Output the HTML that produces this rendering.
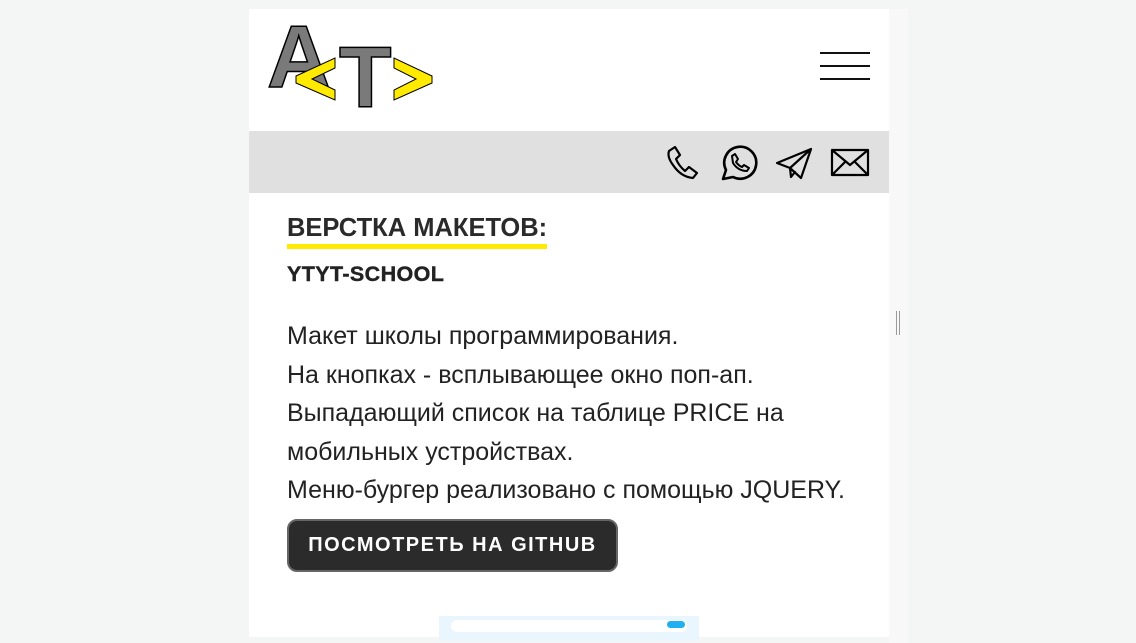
<!DOCTYPE html>
<html><head><meta charset="utf-8"><style>
body{margin:0;width:1136px;height:643px;background:#f4f5f5;overflow:hidden;font-family:"Liberation Sans",sans-serif;position:relative}
.card{position:absolute;left:249px;top:9px;width:640px;height:628px;background:#fff;overflow:hidden}
.sb{position:absolute;left:889px;top:9px;width:19px;height:634px;background:#f8f8f8}
.bar{position:absolute;top:122px;left:0;width:640px;height:62px;background:#e0e0e0}
.burger{position:absolute;left:571px;top:43px;width:50px}
.burger div{height:2px;background:#111;margin-bottom:11px}
.lg{position:absolute;font-weight:bold;color:#7a7a7a;-webkit-text-stroke:1.5px #000;line-height:1}
h2{position:absolute;left:38px;top:205px;margin:0;font-size:25.5px;font-weight:bold;color:#2a2a2a;white-space:nowrap}
.ul{position:absolute;left:38px;top:235px;width:260px;height:5px;background:#ffea00}
h3{position:absolute;left:38px;top:253px;margin:0;font-size:21.5px;font-weight:900;color:#222;-webkit-text-stroke:0.4px #222;letter-spacing:0.4px;white-space:nowrap}
.txt{position:absolute;left:38px;top:308px;font-size:25px;line-height:38.5px;color:#222;width:560px}
.btn{position:absolute;left:38px;top:510px;width:331px;height:53px;background:#2b2b2b;border:2px solid #666;border-radius:10px;box-sizing:border-box;color:#fff;font-weight:bold;font-size:20px;letter-spacing:1.5px;text-align:center;line-height:49px;white-space:nowrap}
.shot{position:absolute;left:190px;top:607px;width:260px;height:25px;background:#eaf6fd}
.shot .n{position:absolute;left:12px;top:4px;width:236px;height:12px;background:#fff;border-radius:6px}
.shot .b{position:absolute;left:228px;top:5px;width:18px;height:7px;background:#1eb0f0;border-radius:4px}
</style></head><body>
<div class="card">
  <div class="lg" style="left:18px;top:4px;font-size:88px">A</div>
  <div class="lg" style="left:90px;top:26px;font-size:86px">T</div>
  <svg style="position:absolute;left:18px;top:14px" width="170" height="96" viewBox="0 0 170 96">
   <polygon points="29,53 68,35 68,45 45,56 68,67 68,77 29,60" fill="#ffea00" stroke="#000" stroke-width="1"/>
   <polygon points="165,53 127,35 127,45 149,56 127,67 127,77 165,60" fill="#ffea00" stroke="#000" stroke-width="1"/>
  </svg>
  <div class="burger"><div></div><div></div><div></div></div>
 <div class="bar">
  <svg style="position:absolute;left:416px;top:14px" width="210" height="36" viewBox="0 0 210 36" fill="none" stroke="#000" stroke-width="2.2" stroke-linejoin="round" stroke-linecap="round">
   <path d="M4 6 L10 2 L15 10 L11 14 Q14 21 20 26 L24 22 L32 28 L28 33 Q16 32 8 20 Q2 12 4 6Z"/>
   <path d="M58 34 L61 25 A16 16 0 1 1 68 32 Z" stroke-width="2.6"/>
   <path d="M67 11 L70 9 L73 14 L71 17 Q74 21 77 22 L79 20 L84 23 L82 26 Q73 26 68 18 Z" stroke-width="2"/>
   <path d="M112 18 L146 4 L136 33 L125 23 Z M125 23 L146 4 M125 23 L126 32 L130 27"/>
   <path d="M167 5 H203 V30 H167 Z M167 5 L185 20 L203 5 M167 30 L180 17 M203 30 L190 17"/>
  </svg>
 </div>
</div>
<div class="sb"><div style="position:absolute;left:7px;top:302px;width:1px;height:24px;background:#999"></div><div style="position:absolute;left:10px;top:302px;width:1px;height:24px;background:#999"></div></div>
<div style="position:absolute;left:249px;top:9px;width:640px;height:628px">
 <h2>ВЕРСТКА МАКЕТОВ:</h2>
 <div class="ul"></div>
 <h3>YTYT-SCHOOL</h3>
 <div class="txt">Макет школы программирования.<br>На кнопках - всплывающее окно поп-ап.<br>Выпадающий список на таблице PRICE на<br>мобильных устройствах.<br>Меню-бургер реализовано с помощью JQUERY.</div>
 <div class="btn">ПОСМОТРЕТЬ НА GITHUB</div>
 <div class="shot"><div class="n"></div><div class="b"></div></div>
</div>
</body></html>
